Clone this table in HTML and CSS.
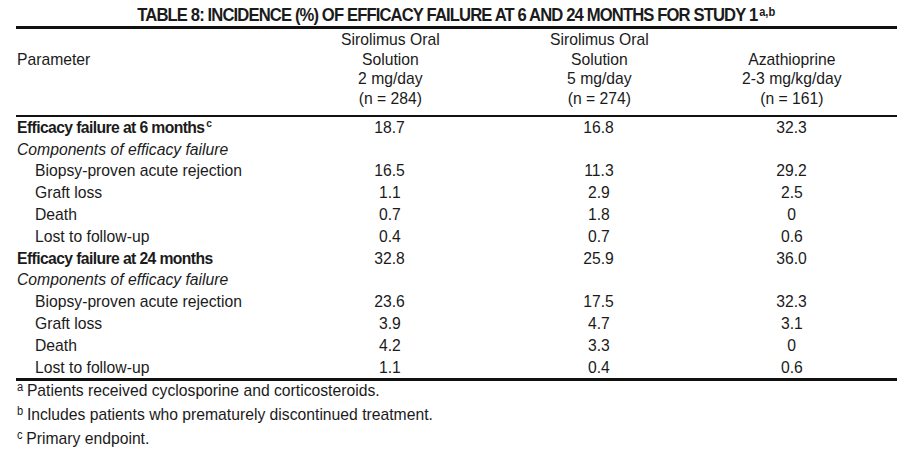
FILE: index.html
```html
<!DOCTYPE html>
<html lang="en">
<head>
<meta charset="utf-8">
<title>Table 8</title>
<link rel="stylesheet" href="styles.css">
</head>
<body>
<div class="page">
  <h1 class="title"><span class="cond">TABLE 8: INCIDENCE (%) OF EFFICACY FAILURE AT 6 AND 24 MONTHS FOR STUDY 1<sup class="title-sup">a,b</sup></span></h1>
  <table class="data">
    <colgroup>
      <col class="c-param">
      <col class="c-a">
      <col class="c-b">
      <col class="c-c">
    </colgroup>
    <thead>
      <tr>
        <th class="param"><span class="cond">Parameter</span></th>
        <th><span class="cond">Sirolimus Oral<br>Solution<br>2 mg/day<br>(n = 284)</span></th>
        <th><span class="cond">Sirolimus Oral<br>Solution<br>5 mg/day<br>(n = 274)</span></th>
        <th class="last"><span class="cond">Azathioprine<br>2-3 mg/kg/day<br>(n = 161)</span></th>
      </tr>
    </thead>
    <tbody>
      <tr class="main"><td class="label"><span class="cond">Efficacy failure at 6 months<sup class="row-sup">c</sup></span></td><td><span class="cond">18.7</span></td><td><span class="cond">16.8</span></td><td class="last"><span class="cond">32.3</span></td></tr>
      <tr class="sub"><td class="label"><span class="cond">Components of efficacy failure</span></td><td></td><td></td><td class="last"></td></tr>
      <tr class="item"><td class="label"><span class="cond">Biopsy-proven acute rejection</span></td><td><span class="cond">16.5</span></td><td><span class="cond">11.3</span></td><td class="last"><span class="cond">29.2</span></td></tr>
      <tr class="item"><td class="label"><span class="cond">Graft loss</span></td><td><span class="cond">1.1</span></td><td><span class="cond">2.9</span></td><td class="last"><span class="cond">2.5</span></td></tr>
      <tr class="item"><td class="label"><span class="cond">Death</span></td><td><span class="cond">0.7</span></td><td><span class="cond">1.8</span></td><td class="last"><span class="cond">0</span></td></tr>
      <tr class="item"><td class="label"><span class="cond">Lost to follow-up</span></td><td><span class="cond">0.4</span></td><td><span class="cond">0.7</span></td><td class="last"><span class="cond">0.6</span></td></tr>
      <tr class="main"><td class="label"><span class="cond">Efficacy failure at 24 months</span></td><td><span class="cond">32.8</span></td><td><span class="cond">25.9</span></td><td class="last"><span class="cond">36.0</span></td></tr>
      <tr class="sub"><td class="label"><span class="cond">Components of efficacy failure</span></td><td></td><td></td><td class="last"></td></tr>
      <tr class="item"><td class="label"><span class="cond">Biopsy-proven acute rejection</span></td><td><span class="cond">23.6</span></td><td><span class="cond">17.5</span></td><td class="last"><span class="cond">32.3</span></td></tr>
      <tr class="item"><td class="label"><span class="cond">Graft loss</span></td><td><span class="cond">3.9</span></td><td><span class="cond">4.7</span></td><td class="last"><span class="cond">3.1</span></td></tr>
      <tr class="item"><td class="label"><span class="cond">Death</span></td><td><span class="cond">4.2</span></td><td><span class="cond">3.3</span></td><td class="last"><span class="cond">0</span></td></tr>
      <tr class="item"><td class="label"><span class="cond">Lost to follow-up</span></td><td><span class="cond">1.1</span></td><td><span class="cond">0.4</span></td><td class="last"><span class="cond">0.6</span></td></tr>
    </tbody>
  </table>
  <ul class="notes">
    <li><span class="cond"><sup class="note-mark">a</sup>Patients received cyclosporine and corticosteroids.</span></li>
    <li><span class="cond"><sup class="note-mark">b</sup>Includes patients who prematurely discontinued treatment.</span></li>
    <li><span class="cond"><sup class="note-mark">c</sup>Primary endpoint.</span></li>
  </ul>
</div>
</body>
</html>
```
FILE: styles.css
```css
html, body {
  margin: 0;
  padding: 0;
  background: #ffffff;
}

body {
  font-family: "Liberation Sans", Arial, sans-serif;
  color: #1b1b1b;
  font-size: 17px;
}

.page {
  padding: 0 10px 0 16px;
}

/* The source uses a condensed grotesque: text runs are narrowed horizontally. */
.cond {
  display: inline-block;
  transform: scaleX(0.924);
  transform-origin: 50% 50%;
  white-space: nowrap;
}

.param .cond,
.label .cond,
.notes .cond {
  transform-origin: 0 50%;
}

.title {
  margin: 0;
  padding-top: 4px;
  font-size: 18px;
  font-weight: bold;
  line-height: 22px;
  text-align: center;
  letter-spacing: -0.95px;
}

.title-sup {
  font-size: 12px;
  vertical-align: 5px;
  line-height: 0;
  letter-spacing: 0;
  margin-left: 2px;
}

.data {
  width: 881px;
  border-collapse: collapse;
  table-layout: fixed;
}

.c-param { width: 270px; }
.c-a { width: 208px; }
.c-b { width: 210px; }
.c-c { width: 193px; }

.data thead th {
  font-weight: normal;
  line-height: 19.7px;
  text-align: center;
  vertical-align: bottom;
  padding: 1px 0 6px 0;
  border-top: 3px solid #111;
  border-bottom: 2px solid #111;
}

.data thead th.param {
  text-align: left;
  padding-left: 1px;
  padding-bottom: 45px;
}

.data th.last,
.data td.last {
  padding-right: 17px;
}

.data tbody td {
  padding: 0;
  line-height: 21.8px;
  text-align: center;
  white-space: nowrap;
}

.data tbody td.label {
  text-align: left;
  padding-left: 1px;
}

.data tbody tr:last-child td {
  border-bottom: 3px solid #111;
}

.data .main td.label {
  font-weight: bold;
  letter-spacing: -0.65px;
}

.data .sub td.label {
  font-style: italic;
}

.data .item td.label {
  padding-left: 19px;
}

.row-sup {
  font-size: 11px;
  font-weight: bold;
  vertical-align: 6px;
  line-height: 0;
  letter-spacing: 0;
  margin-left: 2px;
}

.notes {
  list-style: none;
  margin: -2px 0 0 0;
  padding: 0 0 0 1px;
  line-height: 24px;
}

.note-mark {
  font-size: 12px;
  vertical-align: 5px;
  line-height: 0;
  margin-right: 4px;
}
```
